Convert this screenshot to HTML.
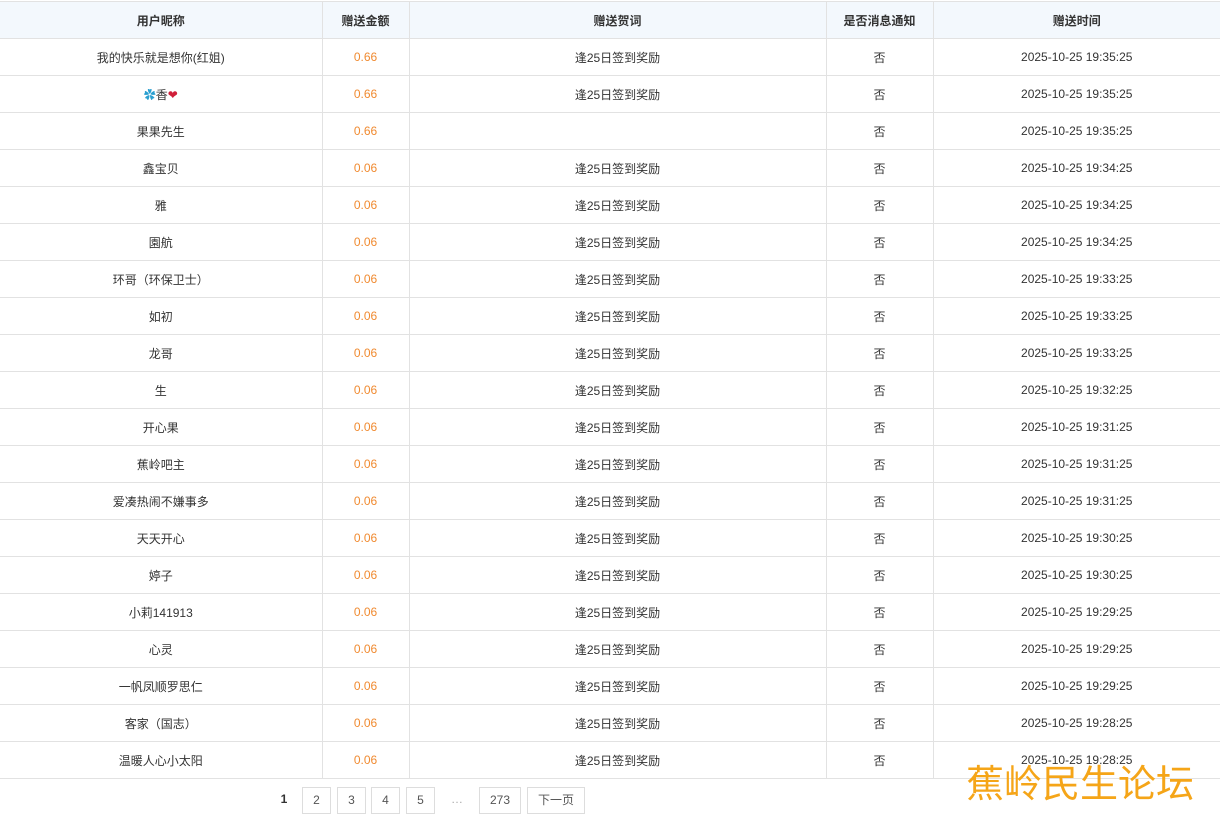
<!DOCTYPE html>
<html><head><meta charset="utf-8"><style>
body{margin:0;width:1220px;height:818px;background:#fff;font-family:"Liberation Sans","Noto Sans CJK SC",sans-serif;font-size:12px;color:#333;position:relative;overflow:hidden}
table{position:absolute;left:0;top:1px;width:1220px;border-collapse:collapse;table-layout:fixed}
th,td{border:1px solid #e2e2e2;text-align:center;height:37px;padding:0;box-sizing:border-box}
th{background:#f3f8fd;font-weight:bold;height:37px}
tr>*:first-child{border-left:none}tr>*:last-child{border-right:none}
td.m{color:#f08a30}
.pg{position:absolute;top:787px;height:27px;border:1px solid #ddd;box-sizing:border-box;line-height:25px;text-align:center;color:#555;font-size:12px}
.wm{position:absolute;left:966px;top:757px;font-size:38px;color:#f5a518;letter-spacing:0;font-family:"Noto Sans CJK SC",sans-serif;line-height:48px}
</style></head><body>
<table>
<colgroup><col style="width:322px"><col style="width:87px"><col style="width:417px"><col style="width:107px"><col style="width:287px"></colgroup>
<tr><th>用户昵称</th><th>赠送金额</th><th>赠送贺词</th><th>是否消息通知</th><th>赠送时间</th></tr>
<tr><td>我的快乐就是想你(红姐)</td><td class="m">0.66</td><td>逢25日签到奖励</td><td>否</td><td>2025-10-25 19:35:25</td></tr>
<tr><td><span style="color:#2a9fd0">✿</span>香<span style="color:#d0203a">❤</span></td><td class="m">0.66</td><td>逢25日签到奖励</td><td>否</td><td>2025-10-25 19:35:25</td></tr>
<tr><td>果果先生</td><td class="m">0.66</td><td></td><td>否</td><td>2025-10-25 19:35:25</td></tr>
<tr><td>鑫宝贝</td><td class="m">0.06</td><td>逢25日签到奖励</td><td>否</td><td>2025-10-25 19:34:25</td></tr>
<tr><td>雅</td><td class="m">0.06</td><td>逢25日签到奖励</td><td>否</td><td>2025-10-25 19:34:25</td></tr>
<tr><td>園航</td><td class="m">0.06</td><td>逢25日签到奖励</td><td>否</td><td>2025-10-25 19:34:25</td></tr>
<tr><td>环哥（环保卫士）</td><td class="m">0.06</td><td>逢25日签到奖励</td><td>否</td><td>2025-10-25 19:33:25</td></tr>
<tr><td>如初</td><td class="m">0.06</td><td>逢25日签到奖励</td><td>否</td><td>2025-10-25 19:33:25</td></tr>
<tr><td>龙哥</td><td class="m">0.06</td><td>逢25日签到奖励</td><td>否</td><td>2025-10-25 19:33:25</td></tr>
<tr><td>生</td><td class="m">0.06</td><td>逢25日签到奖励</td><td>否</td><td>2025-10-25 19:32:25</td></tr>
<tr><td>开心果</td><td class="m">0.06</td><td>逢25日签到奖励</td><td>否</td><td>2025-10-25 19:31:25</td></tr>
<tr><td>蕉岭吧主</td><td class="m">0.06</td><td>逢25日签到奖励</td><td>否</td><td>2025-10-25 19:31:25</td></tr>
<tr><td>爱凑热闹不嫌事多</td><td class="m">0.06</td><td>逢25日签到奖励</td><td>否</td><td>2025-10-25 19:31:25</td></tr>
<tr><td>天天开心</td><td class="m">0.06</td><td>逢25日签到奖励</td><td>否</td><td>2025-10-25 19:30:25</td></tr>
<tr><td>婷子</td><td class="m">0.06</td><td>逢25日签到奖励</td><td>否</td><td>2025-10-25 19:30:25</td></tr>
<tr><td>小莉141913</td><td class="m">0.06</td><td>逢25日签到奖励</td><td>否</td><td>2025-10-25 19:29:25</td></tr>
<tr><td>心灵</td><td class="m">0.06</td><td>逢25日签到奖励</td><td>否</td><td>2025-10-25 19:29:25</td></tr>
<tr><td>一帆凤顺罗思仁</td><td class="m">0.06</td><td>逢25日签到奖励</td><td>否</td><td>2025-10-25 19:29:25</td></tr>
<tr><td>客家（国志）</td><td class="m">0.06</td><td>逢25日签到奖励</td><td>否</td><td>2025-10-25 19:28:25</td></tr>
<tr><td>温暖人心小太阳</td><td class="m">0.06</td><td>逢25日签到奖励</td><td>否</td><td>2025-10-25 19:28:25</td></tr>
</table>
<div class="pg" style="left:274px;width:20px;border:none;font-weight:bold;color:#333">1</div>
<div class="pg" style="left:302px;width:29px">2</div>
<div class="pg" style="left:337px;width:29px">3</div>
<div class="pg" style="left:371px;width:29px">4</div>
<div class="pg" style="left:406px;width:29px">5</div>
<div class="pg" style="left:444px;width:26px;border:none;color:#aaa">…</div>
<div class="pg" style="left:479px;width:42px">273</div>
<div class="pg" style="left:527px;width:58px">下一页</div>
<div class="wm">蕉岭民生论坛</div>
</body></html>
